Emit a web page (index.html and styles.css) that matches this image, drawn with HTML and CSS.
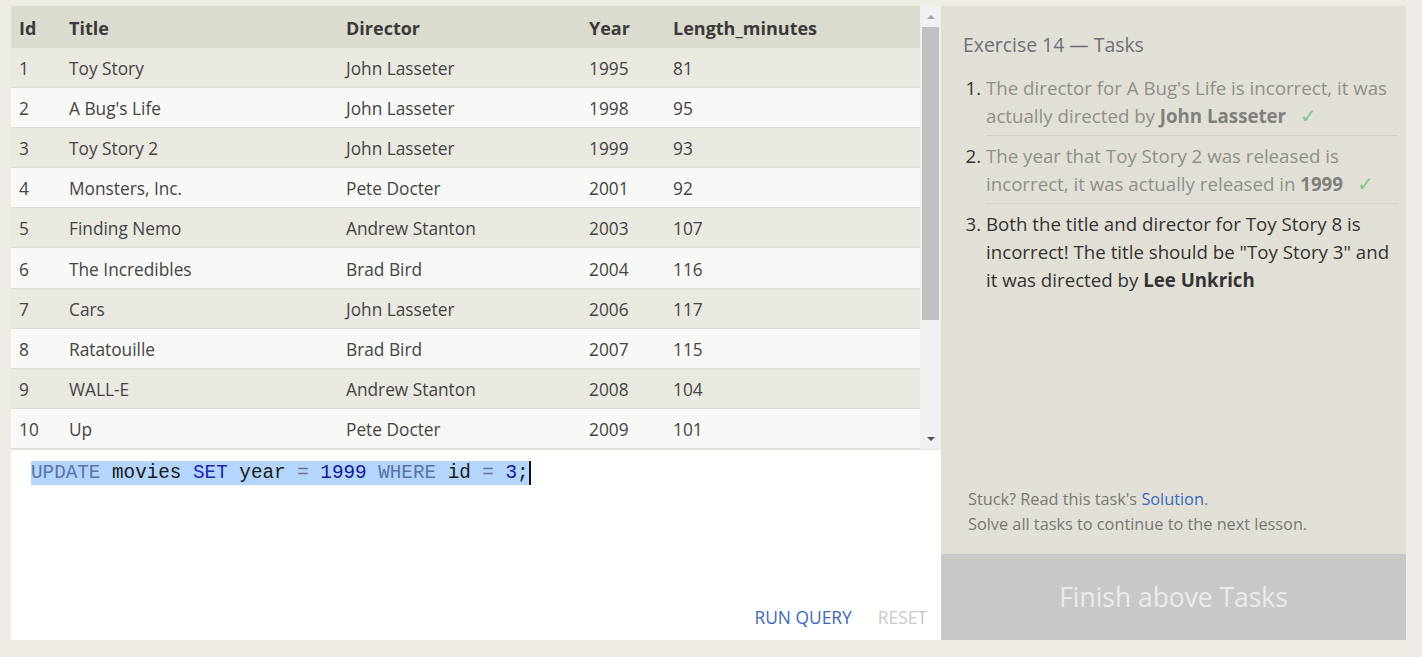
FILE: index.html
```html
<!DOCTYPE html>
<html>
<head>
<meta charset="utf-8">
<link rel="stylesheet" href="styles.css">
</head>
<body>
<div class="page">
  <div class="left">
    <div class="results">
      <div class="table-wrap">
        <table class="data">
          <thead>
            <tr><th class="c-id">Id</th><th class="c-title">Title</th><th class="c-dir">Director</th><th class="c-year">Year</th><th>Length_minutes</th></tr>
          </thead>
          <tbody>
            <tr><td>1</td><td>Toy Story</td><td>John Lasseter</td><td>1995</td><td>81</td></tr>
            <tr><td>2</td><td>A Bug's Life</td><td>John Lasseter</td><td>1998</td><td>95</td></tr>
            <tr><td>3</td><td>Toy Story 2</td><td>John Lasseter</td><td>1999</td><td>93</td></tr>
            <tr><td>4</td><td>Monsters, Inc.</td><td>Pete Docter</td><td>2001</td><td>92</td></tr>
            <tr><td>5</td><td>Finding Nemo</td><td>Andrew Stanton</td><td>2003</td><td>107</td></tr>
            <tr><td>6</td><td>The Incredibles</td><td>Brad Bird</td><td>2004</td><td>116</td></tr>
            <tr><td>7</td><td>Cars</td><td>John Lasseter</td><td>2006</td><td>117</td></tr>
            <tr><td>8</td><td>Ratatouille</td><td>Brad Bird</td><td>2007</td><td>115</td></tr>
            <tr><td>9</td><td>WALL-E</td><td>Andrew Stanton</td><td>2008</td><td>104</td></tr>
            <tr><td>10</td><td>Up</td><td>Pete Docter</td><td>2009</td><td>101</td></tr>
          </tbody>
        </table>
      </div>
      <div class="scrollbar">
        <div class="sb-btn"><span class="arrow-up"></span></div>
        <div class="sb-thumb"></div>
        <div class="sb-space"></div>
        <div class="sb-btn"><span class="arrow-down"></span></div>
      </div>
    </div>
    <div class="editor">
      <div class="code"><span class="sel"><span class="kw">UPDATE</span> movies <span class="kw2">SET</span> year <span class="op">=</span> <span class="num">1999</span> <span class="kw">WHERE</span> id <span class="op">=</span> <span class="num">3</span>;</span><span class="cursor"></span></div>
      <div class="actions">
        <span class="run">RUN QUERY</span>
        <span class="reset">RESET</span>
      </div>
    </div>
  </div>
  <div class="right">
    <div class="tasks">
      <h2 class="tasks-title">Exercise 14 — Tasks</h2>
      <ol class="task-list">
        <li class="done">The director for A Bug's Life is incorrect, it was actually directed by <b>John Lasseter</b><span class="check">✓</span></li>
        <li class="done">The year that Toy Story 2 was released is incorrect, it was actually released in <b>1999</b><span class="check">✓</span></li>
        <li class="todo">Both the title and director for Toy Story 8 is incorrect! The title should be "Toy Story 3" and it was directed by <b>Lee Unkrich</b></li>
      </ol>
    </div>
    <div class="help">
      <p>Stuck? Read this task's <span class="link">Solution</span>.</p>
      <p>Solve all tasks to continue to the next lesson.</p>
    </div>
    <div class="finish">Finish above Tasks</div>
  </div>
</div>
</body>
</html>
```

FILE: styles.css
```css
html, body {
  margin: 0;
  padding: 0;
}
body {
  background: #eeece5;
  font-family: "Open Sans", "Noto Sans", sans-serif;
  width: 1422px;
  height: 657px;
  overflow: hidden;
}
.page {
  display: flex;
  padding: 6px 0 0 11px;
  height: 634px;
}
.left {
  width: 930px;
  display: flex;
  flex-direction: column;
  background: #fff;
}
.results {
  display: flex;
  height: 443px;
  border-bottom: 1px solid #e4e4e0;
}
.table-wrap {
  flex: 1;
  overflow: hidden;
  background: #f7f7f5;
}
.data {
  border-collapse: collapse;
  width: 909px;
  font-size: 17.3px;
  color: #333;
}
.data th {
  background: #dcdbd0;
  height: 40px;
  text-align: left;
  font-weight: 700;
  font-size: 18px;
  padding: 2px 0 0 8px;
  color: #3a3a3a;
}
.data td {
  height: 37.1px;
  padding: 2px 0 0 8px;
  border-bottom: 1px solid #dcdbd4;
  color: #444;
}
.data tbody tr:nth-child(odd) td {
  background: #e9e8e1;
}
.data tbody tr:nth-child(even) td {
  background: #f8f8f7;
}
.c-id { width: 42px; }
.c-title { width: 269px; }
.c-dir { width: 235px; }
.c-year { width: 76px; }
.scrollbar {
  width: 21px;
  background: #f1f1f1;
  display: flex;
  flex-direction: column;
  align-items: center;
}
.sb-btn {
  height: 21px;
  width: 21px;
  display: flex;
  align-items: center;
  justify-content: center;
}
.arrow-up {
  width: 0;
  height: 0;
  border-left: 4px solid transparent;
  border-right: 4px solid transparent;
  border-bottom: 4px solid #a3a3a3;
}
.arrow-down {
  width: 0;
  height: 0;
  border-left: 4px solid transparent;
  border-right: 4px solid transparent;
  border-top: 4px solid #505050;
}
.sb-thumb {
  width: 17px;
  height: 293px;
  background: #c1c1c1;
}
.sb-space {
  flex: 1;
}
.editor {
  flex: 1;
  display: flex;
  flex-direction: column;
  background: #fff;
}
.code {
  margin: 11px 0 0 20px;
  font-family: "Liberation Mono", "DejaVu Sans Mono", monospace;
  font-size: 19.3px;
  line-height: 24px;
  height: 24px;
  display: flex;
  align-items: stretch;
  white-space: pre;
}
.sel {
  background: #b4d5fc;
  color: #1a1a1a;
}
.kw { color: #5b73a9; }
.kw2 { color: #2323b8; }
.num { color: #171796; }
.op { color: #6f7390; }
.cursor {
  width: 2px;
  background: #111;
}
.actions {
  margin-top: auto;
  display: flex;
  justify-content: flex-end;
  gap: 26px;
  padding: 0 14px 11px 0;
  font-size: 17.4px;
  line-height: 24px;
}
.run { color: #3d69b6; }
.reset { color: #c9c9c9; }
.right {
  width: 465px;
  background: #e2e0d6;
  display: flex;
  flex-direction: column;
}
.tasks {
  padding: 0 8px 0 21px;
  flex: 1;
}
.tasks-title {
  margin: 26px 0 10px 1px;
  font-size: 19.4px;
  font-weight: 400;
  line-height: 26px;
  color: #6c7079;
}
.task-list {
  margin: 0;
  padding: 0 0 0 24px;
  font-size: 18.7px;
  line-height: 28px;
}
.task-list li {
  padding: 6px 0 5px;
  border-bottom: 1px solid #d3d1c7;
}
.task-list li:last-child {
  border-bottom: none;
}
.task-list li::marker {
  color: #333;
}
.task-list li.done {
  color: #8f8f8b;
}
.task-list li.done b {
  color: #7f7f7c;
}
.task-list li.todo {
  color: #333;
}
.check {
  color: #7cc98c;
  margin-left: 14px;
  font-size: 20px;
}
.help {
  padding: 0 0 17px 27px;
  font-size: 16.3px;
  line-height: 25px;
  color: #777774;
}
.help p {
  margin: 0;
}
.link {
  color: #3568c0;
}
.finish {
  height: 86px;
  background: #c8c8c8;
  color: #ebebeb;
  font-size: 26.4px;
  display: flex;
  align-items: center;
  justify-content: center;
}
```
